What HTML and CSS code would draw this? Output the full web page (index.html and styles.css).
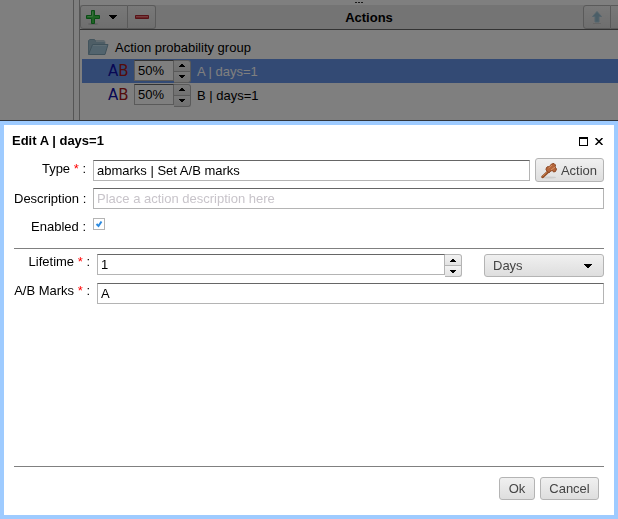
FILE: index.html
```html
<!DOCTYPE html>
<html lang="en">
<head>
<meta charset="utf-8">
<title>Edit A | days=1</title>
<link rel="stylesheet" href="styles.css">
</head>
<body>
<svg class="defs" aria-hidden="true">
  <symbol id="down" viewBox="0 0 8 4"><path d="M0 0h8v1H7v1H6v1H5v1H3V3H2V2H1V1H0z"/></symbol>
  <symbol id="up-small" viewBox="0 0 6 3"><path d="M2 0h2v1h1v1h1v1H0V2h1V1h1z"/></symbol>
  <symbol id="down-small" viewBox="0 0 6 3"><path d="M0 0h6v1H5v1H4v1H2V2H1V1H0z"/></symbol>
</svg>
<div class="page">
  <aside class="side"></aside>
  <main class="panel">
    <div class="grip"><i></i><i></i><i></i></div>
    <header class="bar">
      <div class="group">
        <button class="tool add" type="button" aria-label="Add">
          <svg width="16" height="16" viewBox="0 0 16 16"><ellipse cx="8" cy="15" rx="5" ry="1" fill="#c4c4c4"/><path d="M6.500 1.500h3v5h5v3h-5v5h-3v-5h-5v-3h5z" fill="#3cc848" stroke="#179a2c"/><path d="M7.500 2.500v5h-5" stroke="#74dc7c" fill="none"/></svg>
          <svg width="8" height="4"><use href="#down"/></svg>
        </button>
        <button class="tool" type="button" aria-label="Remove">
          <svg width="16" height="16" viewBox="0 0 16 16"><path d="M1.500 6.500h13v3h-13z" fill="#d4484c" stroke="#b0242e"/><path d="M2 7.500h12" stroke="#e8787c"/></svg>
        </button>
      </div>
      <h1>Actions</h1>
      <div class="group end">
        <button class="tool move" type="button" aria-label="Move up">
          <svg width="16" height="16" viewBox="0 0 16 16"><path d="M4 14.500h8" stroke="#ccc"/><path d="M8 2.500l4.500 5H10v5.500H6V7.500H3.500z" fill="#96bccf" stroke="#a9c9d9"/></svg>
        </button>
        <button class="tool rest" type="button" aria-label="Move down"></button>
      </div>
    </header>
    <div class="tree">
      <div class="row folder">
        <svg width="22" height="18" viewBox="0 0 22 18"><path d="M1.500 16V2.500L3 1.500h4.500l1 1.500h9v3L6 16.500z" fill="#9dbccd" stroke="#86a8bb"/><path d="M9 3.500h9v3" fill="none" stroke="#c2d6e0"/><path d="M1.500 16.500L5.500 6.500h15.500l-3 10z" fill="#a4c8dc" stroke="#7ea2b5"/><path d="M6 7.500h13.500" stroke="#bcdae8"/></svg>
        <span>Action probability group</span>
      </div>
      <div class="row item selected">
        <span class="ab" aria-hidden="true"><b>A</b><i>B</i></span>
        <span class="spin"><input class="box" aria-label="Probability of A" value="50%"><span class="steps"><button type="button" aria-label="Increase"><svg width="6" height="3"><use href="#up-small"/></svg></button><button type="button" aria-label="Decrease"><svg width="6" height="3"><use href="#down-small"/></svg></button></span></span>
        <span>A | days=1</span>
      </div>
      <div class="row item">
        <span class="ab" aria-hidden="true"><b>A</b><i>B</i></span>
        <span class="spin"><input class="box" aria-label="Probability of B" value="50%"><span class="steps"><button type="button" aria-label="Increase"><svg width="6" height="3"><use href="#up-small"/></svg></button><button type="button" aria-label="Decrease"><svg width="6" height="3"><use href="#down-small"/></svg></button></span></span>
        <span>B | days=1</span>
      </div>
    </div>
  </main>
</div>
<div class="shade"></div>
<section class="dialog" role="dialog" aria-labelledby="dialog-title">
  <header class="title">
    <h2 id="dialog-title">Edit A | days=1</h2>
    <button class="plain" type="button" aria-label="Maximize"><svg width="9" height="9" viewBox="0 0 9 9"><path d="M0 0h9v9H0zM1 2v6h7V2z" fill-rule="evenodd"/></svg></button>
    <button class="plain" type="button" aria-label="Close"><svg width="8" height="7" viewBox="0 0 8 7"><path d="M.5 0l7 7M7.500 0l-7 7" stroke="#000" stroke-width="1.500"/></svg></button>
  </header>
  <form class="body">
    <div class="fields general">
      <label for="type">Type <em>*</em> :</label>
      <div class="line">
        <input class="box" id="type" value="abmarks | Set A/B marks">
        <button class="btn action" type="button">
          <svg width="16" height="16" viewBox="0 0 16 16"><ellipse cx="8" cy="14.500" rx="7" ry="1" fill="#ccc"/><path d="M1.500 14L9 7" stroke="#8f4a22" stroke-width="2.500" stroke-linecap="round"/><path d="M1.500 13.500L8.500 7" stroke="#cf8450"/><path d="M5.500 4.500l1.500-1 1 .5 2.500-3 2.500-.5 1.500 1.500-.5 2 1.500 2-1 2.500-2 .5-1-1.500-2 .5-1 1.500-2-.5-1.500-2.500z" fill="#b5653a" stroke="#8a4522"/><path d="M7.500 5l3.500-3M10 7l4-3" stroke="#d8966a"/></svg>
          Action
        </button>
      </div>
      <label for="description">Description :</label>
      <div class="line"><input class="box" id="description" placeholder="Place a action description here"></div>
      <label for="enabled">Enabled :</label>
      <div class="line tick">
        <input type="checkbox" id="enabled" checked>
        <svg width="8" height="8" viewBox="0 0 8 8"><path d="M1.500 4L3.500 6 6.500 1.500" stroke="#2d8be0" stroke-width="2" fill="none"/></svg>
      </div>
    </div>
    <div class="fields marks">
      <label for="lifetime">Lifetime <em>*</em> :</label>
      <div class="line life">
        <span class="spin"><input class="box" id="lifetime" value="1"><span class="steps"><button type="button" aria-label="Increase"><svg width="6" height="3"><use href="#up-small"/></svg></button><button type="button" aria-label="Decrease"><svg width="6" height="3"><use href="#down-small"/></svg></button></span></span>
        <span class="unit">
          <select class="btn" aria-label="Lifetime unit"><option>Days</option></select>
          <svg width="8" height="4"><use href="#down"/></svg>
        </span>
      </div>
      <label for="marks">A/B Marks <em>*</em> :</label>
      <div class="line"><input class="box" id="marks" value="A"></div>
    </div>
    <footer class="foot">
      <button class="btn" type="button">Ok</button>
      <button class="btn" type="button">Cancel</button>
    </footer>
  </form>
</section>
</body>
</html>
```
FILE: styles.css
```css
* {
  box-sizing: border-box;
}

body {
  margin: 0;
  height: 100vh;
  overflow: hidden;
  background: #fff;
  color: #000;
}

body,
button,
input,
select {
  font: 13px/16px "Liberation Sans", Arial, sans-serif;
}

svg {
  display: block;
  flex: none;
}

h1,
h2 {
  margin: 0;
  font-size: 13px;
}

button {
  margin: 0;
  padding: 0;
}

.defs {
  position: absolute;
  width: 0;
  height: 0;
}

/* Page behind the dialog */
.page {
  display: flex;
  gap: 5px;
  height: 100%;
}

.side {
  flex: none;
  width: 74px;
  border-right: 1px solid #ababab;
}

.panel {
  flex: 1;
  display: flex;
  flex-direction: column;
  border-left: 1px solid #ababab;
}

.grip {
  display: flex;
  justify-content: center;
  gap: 1px;
  height: 5px;
  padding: 2px 0 0 20px;
}

.grip i {
  width: 2px;
  height: 1px;
  background: #333;
}

.bar {
  display: grid;
  grid-template-columns: 1fr auto 1fr;
  align-items: center;
  height: 25px;
  background: #e8e8e8;
  border-bottom: 1px solid #666;
}

.bar h1 {
  padding: 2px 0 0 40px;
}

.group {
  display: flex;
  height: 24px;
}

.end {
  justify-content: flex-end;
}

.tool {
  display: flex;
  align-items: center;
  justify-content: center;
  width: 28px;
  border: 1px solid #b4b4b4;
  border-left-width: 0;
  border-radius: 0 3px 3px 0;
  background: linear-gradient(#f2f2f2, #dedede);
}

.tool.add {
  justify-content: flex-start;
  width: 48px;
  gap: 8px;
  padding-left: 4px;
  border-left-width: 1px;
  border-radius: 3px 0 0 3px;
}

.tool.move {
  border-left-width: 1px;
  border-radius: 3px 0 0 3px;
}

.tool.rest {
  width: 7px;
  border-right: 0;
  border-radius: 0;
}

.tree {
  padding: 5px 0 0 2px;
}

.row {
  display: flex;
  align-items: center;
  height: 24px;
}

.row > span:last-child {
  padding-top: 2px;
}

.folder {
  gap: 6px;
  padding-left: 5px;
}

.item {
  padding-left: 26px;
}

.item > :last-child {
  padding-left: 6px;
}

.selected {
  background: #6694e8;
  color: #fff;
}

.ab {
  display: flex;
  width: 26px;
  font: 15px/18px "DejaVu Sans", Verdana, sans-serif;
}

.ab b {
  color: #1010a8;
  font-weight: normal;
}

.ab i {
  color: #a81818;
  font-style: normal;
}

.item .spin {
  width: 57px;
}

.item .box {
  padding-top: 2px;
}

.shade {
  position: fixed;
  inset: 0;
  background: rgba(0, 0, 0, 0.5);
}

/* Shared controls */
.box {
  flex: 1;
  min-width: 0;
  width: 100%;
  height: 21px;
  padding: 1px 3px;
  border: 1px solid #b4b4b4;
  border-top-color: #666;
  border-radius: 0;
  background: #fff;
  color: #000;
}

.box::placeholder {
  color: #c8c4ca;
}

.spin {
  display: flex;
}

.steps {
  display: flex;
  flex-direction: column;
  width: 17px;
}

.steps button {
  display: flex;
  align-items: center;
  justify-content: center;
  height: 11px;
  padding-right: 1px;
  border: 1px solid #b4b4b4;
  border-left: 0;
  background: linear-gradient(#f2f2f2, #e2e2e2);
}

.steps button:first-child {
  height: 12px;
  border-radius: 0 3px 0 0;
}

.steps button:last-child {
  border-top: 0;
  border-radius: 0 0 3px 0;
}

.btn {
  display: flex;
  align-items: center;
  justify-content: center;
  height: 23px;
  padding: 0 8px;
  border: 1px solid #b4b4b4;
  border-radius: 3px;
  background: linear-gradient(#f0f0f0, #dedede);
  color: #444;
}

/* Dialog */
.dialog {
  position: fixed;
  inset: 121px 0 0;
  display: flex;
  flex-direction: column;
  border: 4px solid #9ecbff;
  background: #fff;
  box-shadow: 0 0 0 1px #30353c;
}

.title {
  display: flex;
  align-items: center;
  gap: 7px;
  height: 32px;
  padding: 0 11px 0 8px;
}

.title h2 {
  flex: 1;
}

.plain {
  border: 0;
  background: none;
}

.body {
  flex: 1;
  display: flex;
  flex-direction: column;
  padding: 0 10px;
}

.fields {
  display: grid;
  align-content: start;
}

.fields label {
  padding-right: 7px;
  text-align: right;
  white-space: nowrap;
}

.fields em {
  color: #f00;
  font-style: normal;
}

.line {
  display: flex;
  align-items: flex-start;
  min-width: 0;
}

.general {
  grid-template-columns: 79px 1fr;
  grid-template-rows: 28px 28px 35px;
}

.general label {
  padding-top: 4px;
}

.general label[for="description"],
.general label[for="enabled"] {
  padding-top: 6px;
}

.general .line {
  padding-top: 3px;
  gap: 5px;
}

.general .action {
  gap: 4px;
  width: 69px;
  height: 24px;
  padding: 1px 5px 0 4px;
  margin-top: -2px;
}

.general .tick {
  position: relative;
  padding-top: 5px;
}

.tick input {
  appearance: none;
  width: 12px;
  height: 12px;
  margin: 0;
  border: 1px solid #b4b4b4;
}

.tick svg {
  position: absolute;
  top: 7px;
  left: 2px;
}

.marks {
  flex: 1;
  grid-template-columns: 83px 1fr;
  row-gap: 6px;
  padding-top: 5px;
  border: solid #808080;
  border-width: 1px 0;
}

.life {
  gap: 22px;
}

.life .spin {
  flex: 1;
}

.unit {
  position: relative;
  width: 120px;
}

.unit select {
  appearance: none;
  width: 100%;
}

.unit svg {
  position: absolute;
  top: 10px;
  right: 12px;
  pointer-events: none;
}

.foot {
  display: flex;
  justify-content: flex-end;
  gap: 5px;
  padding: 10px 5px 15px;
}

.foot .btn {
  min-width: 36px;
}

.foot .btn:last-child {
  min-width: 59px;
}
```
